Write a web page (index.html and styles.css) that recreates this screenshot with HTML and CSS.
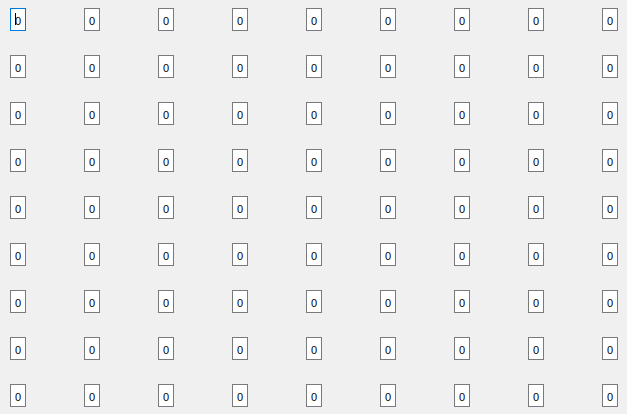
FILE: index.html
```html
<!DOCTYPE html>
<html>
<head>
<meta charset="utf-8">
<link rel="stylesheet" href="styles.css">
</head>
<body>
<div class="grid">
<div class="cell focused"><span class="caret"></span>0</div><div class="cell">0</div><div class="cell">0</div><div class="cell">0</div><div class="cell">0</div><div class="cell">0</div><div class="cell">0</div><div class="cell">0</div><div class="cell">0</div>
<div class="cell">0</div><div class="cell">0</div><div class="cell">0</div><div class="cell">0</div><div class="cell">0</div><div class="cell">0</div><div class="cell">0</div><div class="cell">0</div><div class="cell">0</div>
<div class="cell">0</div><div class="cell">0</div><div class="cell">0</div><div class="cell">0</div><div class="cell">0</div><div class="cell">0</div><div class="cell">0</div><div class="cell">0</div><div class="cell">0</div>
<div class="cell">0</div><div class="cell">0</div><div class="cell">0</div><div class="cell">0</div><div class="cell">0</div><div class="cell">0</div><div class="cell">0</div><div class="cell">0</div><div class="cell">0</div>
<div class="cell">0</div><div class="cell">0</div><div class="cell">0</div><div class="cell">0</div><div class="cell">0</div><div class="cell">0</div><div class="cell">0</div><div class="cell">0</div><div class="cell">0</div>
<div class="cell">0</div><div class="cell">0</div><div class="cell">0</div><div class="cell">0</div><div class="cell">0</div><div class="cell">0</div><div class="cell">0</div><div class="cell">0</div><div class="cell">0</div>
<div class="cell">0</div><div class="cell">0</div><div class="cell">0</div><div class="cell">0</div><div class="cell">0</div><div class="cell">0</div><div class="cell">0</div><div class="cell">0</div><div class="cell">0</div>
<div class="cell">0</div><div class="cell">0</div><div class="cell">0</div><div class="cell">0</div><div class="cell">0</div><div class="cell">0</div><div class="cell">0</div><div class="cell">0</div><div class="cell">0</div>
<div class="cell">0</div><div class="cell">0</div><div class="cell">0</div><div class="cell">0</div><div class="cell">0</div><div class="cell">0</div><div class="cell">0</div><div class="cell">0</div><div class="cell">0</div>
</div>
</body>
</html>
```
FILE: styles.css
```css
html, body {
  margin: 0;
  padding: 0;
  background: #f0f0f0;
  width: 627px;
  height: 414px;
  overflow: hidden;
}
.grid {
  display: grid;
  grid-template-columns: repeat(9, 16px);
  grid-auto-rows: 23px;
  column-gap: 58px;
  row-gap: 24px;
  padding: 8px 0 0 10px;
}
.cell {
  position: relative;
  box-sizing: border-box;
  width: 16px;
  height: 23px;
  border: 1px solid #7a7a7a;
  background: #ffffff;
  font-family: "Liberation Sans", Arial, sans-serif;
  font-size: 11px;
  padding-top: 3px;
  line-height: 18px;
  text-align: center;
  color: #000;
}
.focused {
  border-color: #0078d7;
}
.caret {
  position: absolute;
  left: 4px;
  top: 4px;
  width: 1px;
  height: 12px;
  background: #000;
}
```
